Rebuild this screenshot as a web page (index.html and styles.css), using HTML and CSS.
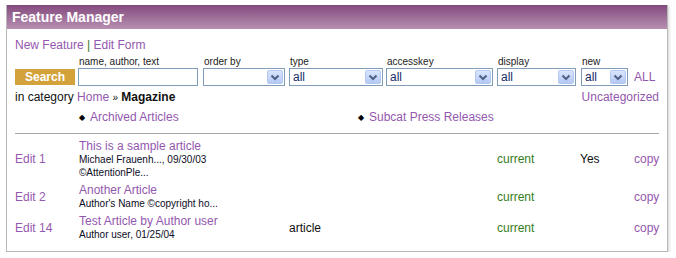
FILE: index.html
```html
<!DOCTYPE html>
<html lang="en">
<head>
  <meta charset="UTF-8">
  <title>Feature Manager</title>
  <link rel="stylesheet" href="styles.css">
</head>
<body>
  <div class="panel">
    <div class="panel-head">Feature Manager</div>
    <div class="panel-body">
      <div class="toplinks"><a href="#">New Feature</a> <span class="sep">|</span> <a href="#">Edit Form</a></div>

      <form class="filters">
        <div class="field"><button type="button" class="search-btn">Search</button></div>
        <div class="field">
          <label>name, author, text</label>
          <input type="text" class="txt">
        </div>
        <div class="field">
          <label>order by</label>
          <select class="sel w-order"><option></option></select>
        </div>
        <div class="field">
          <label>type</label>
          <select class="sel w-type"><option>all</option></select>
        </div>
        <div class="field">
          <label>accesskey</label>
          <select class="sel w-access"><option>all</option></select>
        </div>
        <div class="field">
          <label>display</label>
          <select class="sel w-display"><option>all</option></select>
        </div>
        <div class="field">
          <label>new</label>
          <select class="sel w-new"><option>all</option></select>
        </div>
        <div class="field"><a href="#" class="all-link">ALL</a></div>
      </form>

      <div class="category">
        <span>in category <a href="#">Home</a> <span class="raquo">&raquo;</span> <b>Magazine</b></span>
        <a href="#">Uncategorized</a>
      </div>

      <ul class="subcats">
        <li><a href="#">Archived Articles</a></li>
        <li><a href="#">Subcat Press Releases</a></li>
      </ul>

      <hr class="rule">

      <table class="articles">
        <colgroup>
          <col class="c-edit"><col class="c-title"><col class="c-type"><col class="c-status"><col class="c-new"><col class="c-copy">
        </colgroup>
        <tr>
          <td><a href="#">Edit 1</a></td>
          <td>
            <a href="#" class="title">This is a sample article</a>
            <div class="meta">Michael Frauenh..., 09/30/03</div>
            <div class="meta">&copy;AttentionPle...</div>
          </td>
          <td></td>
          <td class="status">current</td>
          <td>Yes</td>
          <td><a href="#">copy</a></td>
        </tr>
        <tr>
          <td><a href="#">Edit 2</a></td>
          <td>
            <a href="#" class="title">Another Article</a>
            <div class="meta">Author's Name &copy;copyright ho...</div>
          </td>
          <td></td>
          <td class="status">current</td>
          <td></td>
          <td><a href="#">copy</a></td>
        </tr>
        <tr>
          <td><a href="#">Edit 14</a></td>
          <td>
            <a href="#" class="title">Test Article by Author user</a>
            <div class="meta">Author user, 01/25/04</div>
          </td>
          <td>article</td>
          <td class="status">current</td>
          <td></td>
          <td><a href="#">copy</a></td>
        </tr>
      </table>
    </div>
  </div>
</body>
</html>
```

FILE: styles.css
```css
body {
  margin: 5px 0 0 6px;
  background: #fff;
  font-family: "Liberation Sans", Arial, sans-serif;
  font-size: 12px;
  color: #111;
}
a {
  color: #9358ae;
  text-decoration: none;
}
.panel {
  width: 660px;
  border: 1px solid #b8b8b8;
  border-top: none;
  box-shadow: 1px 1px 3px rgba(0,0,0,0.18);
  background: #fff;
}
.panel-head {
  height: 24px;
  line-height: 24px;
  padding-left: 5px;
  background: linear-gradient(#834a7d, #b790b2);
  color: #fff;
  font-weight: bold;
  font-size: 14px;
}
.panel-body {
  padding: 8px 8px 8px 8px;
}
.toplinks {
  line-height: 16px;
}
.sep {
  color: #3d7a1c;
}
.filters {
  display: grid;
  grid-template-columns: 63px 125px 86px 97px 111px 84px 53px auto;
  align-items: end;
  margin-top: 3px;
}
.field label {
  display: block;
  font-size: 10px;
  line-height: 12px;
  padding-left: 1px;
  color: #222;
}
.search-btn {
  display: block;
  width: 60px;
  height: 16px;
  margin-bottom: 1px;
  padding: 0;
  border: none;
  background: #d3a23b;
  color: #fff;
  font-family: "Liberation Sans", Arial, sans-serif;
  font-weight: bold;
  font-size: 12px;
}
.txt, .sel {
  display: block;
  box-sizing: border-box;
  height: 18px;
  margin: 0;
  border: 1px solid #7f9db9;
  background-color: #fff;
  font-family: "Liberation Sans", Arial, sans-serif;
  font-size: 12px;
  color: #1a2a6a;
}
.txt {
  width: 120px;
}
.sel {
  appearance: none;
  -webkit-appearance: none;
  padding: 0 18px 0 3px;
  border-radius: 0;
  background-image: url("data:image/svg+xml,%3Csvg xmlns='http://www.w3.org/2000/svg' width='16' height='14'%3E%3Cdefs%3E%3ClinearGradient id='g' x1='0' y1='0' x2='0' y2='1'%3E%3Cstop offset='0' stop-color='%23dbe6fd'/%3E%3Cstop offset='1' stop-color='%23b3c7f3'/%3E%3C/linearGradient%3E%3C/defs%3E%3Crect x='0.5' y='0.5' width='15' height='13' rx='1.5' fill='url(%23g)' stroke='%23b5c8ef'/%3E%3Cpath d='M4.5 5.5 L8 9 L11.5 5.5' fill='none' stroke='%234d6185' stroke-width='2'/%3E%3C/svg%3E");
  background-repeat: no-repeat;
  background-position: right 1px center;
}
.w-order { width: 82px; }
.w-type { width: 94px; }
.w-access { width: 107px; }
.w-display { width: 79px; }
.w-new { width: 47px; }
.all-link {
  display: block;
  line-height: 18px;
}
.category {
  display: flex;
  justify-content: space-between;
  line-height: 16px;
  margin-top: 3px;
}
.raquo {
  font-size: 10px;
}
.subcats {
  display: grid;
  grid-template-columns: 279px 279px;
  list-style: none;
  margin: 3px 0 0 0;
  padding: 0 0 0 64px;
  line-height: 16px;
}
.subcats li::before {
  content: "\25C6";
  display: inline-block;
  width: 11px;
  font-size: 8px;
  color: #000;
  vertical-align: 1px;
}
.rule {
  border: none;
  border-top: 1px solid #a8a8a8;
  margin: 7px 0 3px 0;
}
.articles {
  width: 645px;
  border-collapse: collapse;
  table-layout: fixed;
}
.c-edit { width: 64px; }
.c-title { width: 210px; }
.c-type { width: 208px; }
.c-status { width: 83px; }
.c-new { width: 54px; }
.c-copy { width: 26px; }
.articles td {
  padding: 2px 0;
  vertical-align: middle;
  line-height: 14px;
}
.title {
  display: block;
  line-height: 14px;
}
.meta {
  font-size: 10px;
  line-height: 13px;
  color: #0c0c24;
}
.status {
  color: #367d1e;
}
```
